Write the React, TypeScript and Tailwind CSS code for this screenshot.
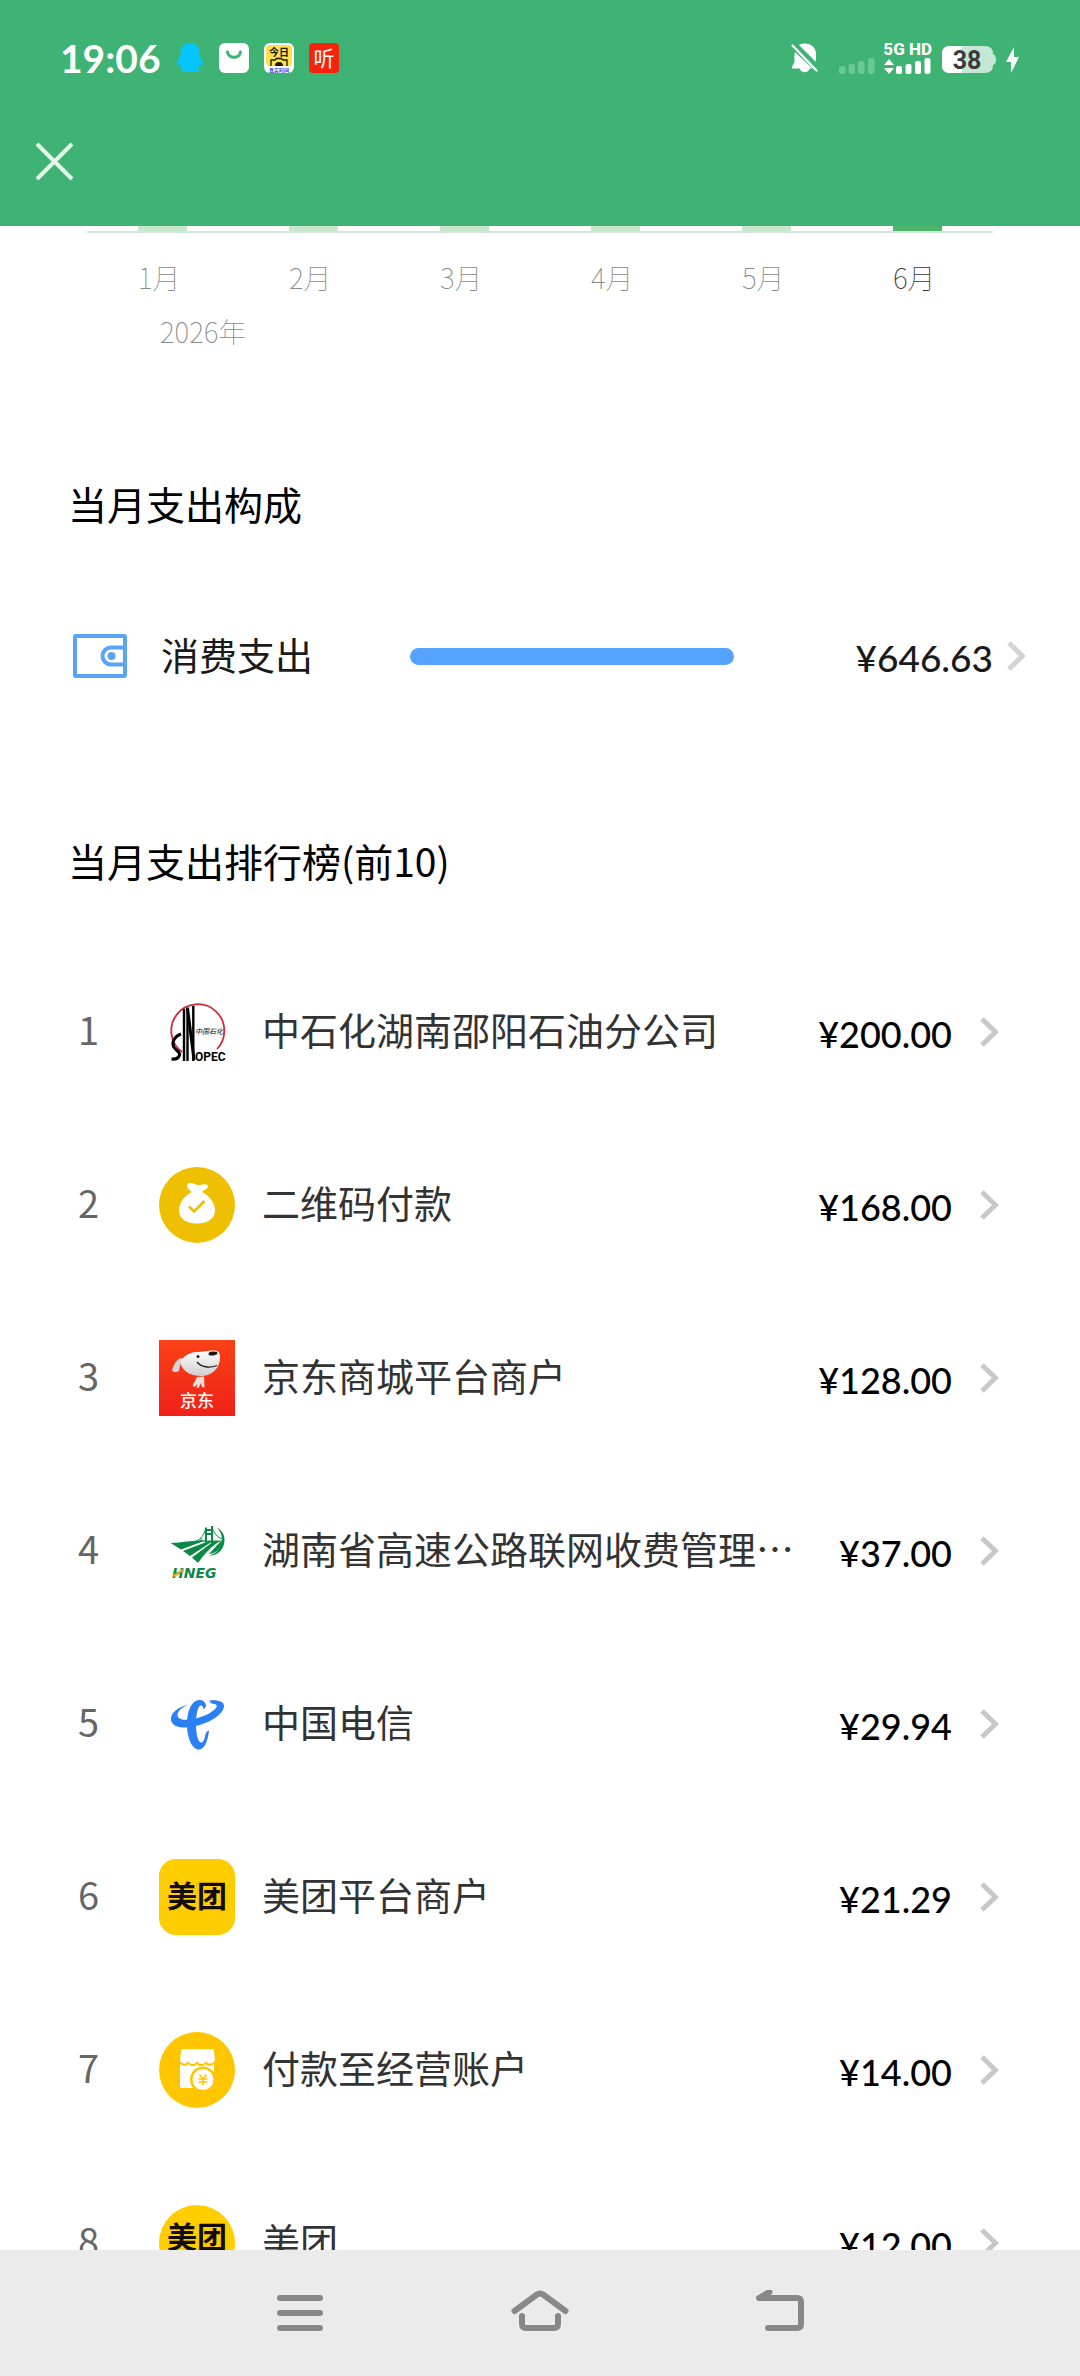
import type { ReactNode } from "react"

interface Month {
  label: string
  active?: boolean
}

interface RankItem {
  name: string
  amount: string
  icon: ReactNode
}

const months: Month[] = [
  { label: "1月" },
  { label: "2月" },
  { label: "3月" },
  { label: "4月" },
  { label: "5月" },
  { label: "6月", active: true },
]

function Chevron({ className }: { className: string }) {
  return (
    <svg className={className} width="19" height="30" viewBox="0 0 19 30" fill="none" stroke="currentColor" strokeWidth="5" aria-hidden="true">
      <path d="M2 2 15.5 15 2 28" />
    </svg>
  )
}

function SinopecIcon() {
  return (
    <svg width="76" height="76" viewBox="0 0 76 76" aria-hidden="true">
      <path d="M23 58A26.500 26.500 0 1 1 58 55" fill="none" stroke="#d02a3e" strokeWidth="1.800" />
      <path d="M25 15v52M28.500 13.500v53.500M34.300 12v55" stroke="#000" strokeWidth="2.400" />
      <path d="M28.500 14l6.500 52" stroke="#000" strokeWidth="3" />
      <path d="M22 40c-6 2-9.500 8-7.500 12.500s7 5 6 8.500-4 4.500-8 4" fill="none" stroke="#000" strokeWidth="3" />
      <text x="36" y="67" fontSize="12" fontWeight="700" fontFamily="Roboto, sans-serif">OPEC</text>
      <text x="36" y="40" fontSize="7" fontStyle="italic" fontFamily="'Noto Sans CJK SC', sans-serif">中国石化</text>
    </svg>
  )
}

function MoneyBagIcon() {
  return (
    <svg width="76" height="76" viewBox="0 0 76 76" aria-hidden="true">
      <circle cx="38" cy="38" r="38" fill="#efc000" />
      <path d="M33 25c-3-2-5.500-4.500-5-7 .7-2.500 4-2.700 6.500-1.500 3.500 1.700 5 2 8 1.200 3-.8 6.500-.2 6.500 1.300 0 3-4.500 4-6 6 7.500 3.500 13 11 13 18.500C56 52 48 56.500 38 56.500S20 52 20 43.500C20 36 25.500 28.500 33 25z" fill="#fff" />
      <path d="M30 39.500l5 5L45.500 34" fill="none" stroke="#efc000" strokeWidth="2.600" />
    </svg>
  )
}

function JdIcon() {
  return (
    <svg width="76" height="76" viewBox="0 0 76 76" aria-hidden="true">
      <defs>
        <linearGradient id="jd-bg" x1="0" y1="0" x2="0" y2="1">
          <stop offset="0" stopColor="#fb4116" />
          <stop offset="1" stopColor="#ef2118" />
        </linearGradient>
        <linearGradient id="jd-head" x1="0" y1="0" x2="0" y2="1">
          <stop offset="0" stopColor="#fff" />
          <stop offset="1" stopColor="#cfcfcf" />
        </linearGradient>
      </defs>
      <rect width="76" height="76" fill="url(#jd-bg)" />
      <path d="M22 18c-4 1-6.500 5-9 12 1 2.500 5 2.500 7 1 .5-3 1-7 4-12z" fill="#d8d4d4" />
      <path d="M22 21c3-6 9-8.500 16-9 7-.5 13-2 18-1.500 4 .3 5 3 5 7C61 29 52 36 42 36c-10 0-17-4-20-11z" fill="url(#jd-head)" />
      <ellipse cx="54" cy="13.500" rx="4.500" ry="2" transform="rotate(-5 54 13.500)" fill="#1c1010" />
      <circle cx="39" cy="16.500" r="1.500" fill="#222" />
      <path d="M38 22c4 5 12 6.500 20 3.500" fill="none" stroke="#222" strokeWidth="1.300" />
      <path d="M38 37l7-.5.500 11-2.500-.5-1-4-2.500 5h-2l1-4-3 3-2-1.500z" fill="#f4dcd8" />
      <text x="38" y="67" fontSize="17" fontWeight="500" fill="#fff" textAnchor="middle" fontFamily="'Noto Sans CJK SC', sans-serif">京东</text>
    </svg>
  )
}

function HnegIcon() {
  return (
    <svg width="76" height="76" viewBox="0 0 76 76" aria-hidden="true">
      <g fill="#0b8a46">
        <path d="M11.500 30c11-.5 20-2.500 35-2.500L22 36.500z" />
        <path d="M24 38l26-10h4L31 43z" />
        <path d="M33 44.500L55 28h6c-8 5-15 12-22 22z" />
        <path d="M57 14c6 3 9 8 8.500 14C65 37 58 43 50 42.500 58 40 63 35 63 27.500 63 22 61 17 57 14z" />
        <path d="M50 41l11-12 3-1c-1 7-6 12-14 13z" />
      </g>
      <path d="M47 14.500V30M53 13v17M47 17h6M47 21h6" stroke="#0b8a46" strokeWidth="2" />
      <path d="M37 28c5-2 8-6 9.500-12M53 15c2 5 5 9 10 11M40 28h24M42 25v4" fill="none" stroke="#0b8a46" strokeWidth="1" />
      <text x="13" y="65" fontSize="14" fontWeight="700" fontStyle="italic" fill="#0b8a46" fontFamily="'DejaVu Sans', Verdana, sans-serif">HNEG</text>
      <path d="M14 63c5-1 7-6 11-6" fill="none" stroke="#e5a72c" strokeWidth="2.500" />
    </svg>
  )
}

function TelecomIcon() {
  return (
    <svg width="76" height="76" viewBox="0 0 76 76" fill="#2b80f5" aria-hidden="true">
      <path d="M29 18.500C18 21 11 28 12 34c1 7 11 9 23 6.500C51 37 64 28.500 65 20.500c.5-5-6-7-14.500-6 .5 2 1.500 3 3.500 3.200 4 .5 4.500 2.300 3 4.300C53 26.500 45 31 34 33c-9 1.700-15.500.5-15.500-4C18.500 25.500 22.500 21.500 29 18.500z" />
      <path d="M47 20.500c0-4-2.500-6.500-6.500-6.500C33 14 28 24 28 38c0 15 5.500 25.500 12 25.500 5 0 9-8 10-19-1.500.5-2.500 1-3.500 3.500-.8 4.500-2 8.500-4 8.500-3.500 0-5.500-8-5.500-18 0-11 2-19 5-19 1.500 0 2 1.500 2.500 4z" />
    </svg>
  )
}

function MeituanIcon({ round }: { round?: boolean }) {
  return (
    <svg width="76" height="76" viewBox="0 0 76 76" aria-hidden="true">
      <rect width="76" height="76" rx={round ? 38 : 17} fill="#ffcd00" />
      <text x="38" y={round ? 43 : 48} fontSize="30" fontWeight="700" fill="#120c04" textAnchor="middle" fontFamily="'Noto Sans CJK SC', sans-serif">美团</text>
    </svg>
  )
}

function MerchantIcon() {
  return (
    <svg width="76" height="76" viewBox="0 0 76 76" aria-hidden="true">
      <circle cx="38" cy="38" r="38" fill="#ffc600" />
      <path d="M23 17h30q2 0 2 2l1 9c-2 4-7 5-9 1-2 4-7 4-9 0-2 4-7 4-9 0-2 4-7 3-8-1l1-9q0-2 1-2z" fill="#fff" />
      <path d="M21 32c3 3 7 2 8.500 0 2.500 3 6 3 8.500 0 2.500 3 6 3 8.500 0 2.500 3 6 2 8.500 0v22q0 2-2 2H23q-2 0-2-2z" fill="#fff" />
      <circle cx="44" cy="47.500" r="13" fill="#ffc600" />
      <circle cx="44" cy="47.500" r="10.500" fill="#fff" />
      <path d="M40.500 42.500l3.500 4.500 3.500-4.500M39.500 47h9M39.500 50h9M44 47v6.500" fill="none" stroke="#ffc600" strokeWidth="1.500" />
    </svg>
  )
}

const ranking: RankItem[] = [
  { name: "中石化湖南邵阳石油分公司", amount: "200.00", icon: <SinopecIcon /> },
  { name: "二维码付款", amount: "168.00", icon: <MoneyBagIcon /> },
  { name: "京东商城平台商户", amount: "128.00", icon: <JdIcon /> },
  { name: "湖南省高速公路联网收费管理…", amount: "37.00", icon: <HnegIcon /> },
  { name: "中国电信", amount: "29.94", icon: <TelecomIcon /> },
  { name: "美团平台商户", amount: "21.29", icon: <MeituanIcon /> },
  { name: "付款至经营账户", amount: "14.00", icon: <MerchantIcon /> },
  { name: "美团", amount: "12.00", icon: <MeituanIcon round /> },
]

function StatusBar() {
  return (
    <div className="flex h-[96px] items-center justify-between pt-5 pr-[60px] pl-[60px] text-white">
      <div className="flex items-center gap-[15px]">
        <time className="font-['Lato'] text-[39px] leading-none font-bold">19:06</time>
        {/* QQ */}
        <svg width="28" height="30" viewBox="0 0 28 30" aria-hidden="true">
          <path d="M14 0c6 0 9.500 4 9.500 10v3c2 3 4 7 3.500 9.500-.5 1-2-.5-3-1.500-.3 2-1 3-2 4.500 2 1 1 3.500-1 3.500H7c-2 0-3-2.500-1-3.500-1-1.500-1.700-2.500-2-4.500-1 1-2.500 2.500-3 1.500C.5 20 2.500 16 4.500 13v-3C4.500 4 8 0 14 0z" fill="#04c6fd" />
        </svg>
        {/* Shopping bag */}
        <svg width="30" height="30" viewBox="0 0 30 30" aria-hidden="true">
          <rect width="30" height="30" rx="6" fill="#fff" />
          <path d="M8.500 9c1 7 12 7 13 0" fill="none" stroke="#3eb373" strokeWidth="3" strokeLinecap="round" />
        </svg>
        {/* Watermark camera */}
        <svg width="30" height="30" viewBox="0 0 30 30" aria-hidden="true">
          <rect width="30" height="30" rx="6" fill="#fff" />
          <rect x="2" y="2" width="26" height="21" rx="4" fill="#fbe14a" />
          <text x="15" y="12.500" fontSize="10" fontWeight="700" fill="#1b1705" textAnchor="middle" fontFamily="'Noto Sans CJK SC', sans-serif">今日</text>
          <path d="M7 23v-6h4l1.500-1.500h5L19 17h4v6" fill="none" stroke="#1b1705" strokeWidth="1.300" />
          <path d="M11 23a4 4 0 0 1 8 0z" fill="#1b1705" />
          <text x="15" y="28.500" fontSize="5" fontWeight="700" fill="#2448d8" textAnchor="middle" fontFamily="'Noto Sans CJK SC', sans-serif">真实时间</text>
        </svg>
        {/* Audio books */}
        <svg width="30" height="30" viewBox="0 0 30 30" aria-hidden="true">
          <rect width="30" height="30" rx="4" fill="#f8230c" />
          <text x="15" y="23" fontSize="21" fill="#fff" textAnchor="middle" fontFamily="'Noto Sans CJK SC', sans-serif">听</text>
        </svg>
      </div>

      <div className="flex items-center">
        {/* Muted bell */}
        <svg width="28" height="30" viewBox="0 0 28 30" aria-hidden="true">
          <path d="M4 9c-1 3-.5 7-.5 10L1 24v1.500h8c.5 5 9 5 9.500 0h3L4 9zM8 2c7-4 17 0 17 9v8L8 2z" fill="#fff" />
          <path d="M1.500 2.500l24 25" stroke="#fff" strokeWidth="2.200" strokeLinecap="round" />
        </svg>
        {/* Empty sim */}
        <svg className="mt-4 ml-[20px]" width="36" height="17" viewBox="0 0 36 17" fill="#6ac796" aria-hidden="true">
          <rect y="8" width="6.500" height="8" rx="2" />
          <rect x="9.500" y="6" width="6.500" height="10" rx="2" />
          <rect x="19" y="3" width="6.500" height="13" rx="2" />
          <rect x="29" width="6.500" height="16" rx="2" />
        </svg>
        <div className="ml-[8px] flex flex-col">
          <span className="font-['Roboto'] text-[17px] leading-[17px] font-extrabold whitespace-nowrap">5G HD</span>
          <svg width="48" height="17" viewBox="0 0 48 17" fill="#fff" aria-hidden="true">
            <path d="M6 1l5 6H1zM6 16l5-6H1z" />
            <rect x="13" y="8" width="6" height="8" rx="2" />
            <rect x="22.500" y="6" width="6" height="10" rx="2" />
            <rect x="32" y="3" width="6" height="13" rx="2" />
            <rect x="41.500" width="6" height="16" rx="2" />
          </svg>
        </div>
        {/* Battery */}
        <svg className="mt-1 ml-[10px]" width="54" height="28" viewBox="0 0 54 28" aria-hidden="true">
          <path d="M8 0h35q8 0 8 8 3 1 3 5.500T51 19q0 8-8 8H8q-8 0-8-8V8q0-8 8-8z" fill="#c5e8d5" />
          <path d="M8 0h12v27H8q-8 0-8-8V8q0-8 8-8z" fill="#fff" />
          <text x="25" y="23" fontSize="25" fontWeight="700" fill="#3b3b3b" textAnchor="middle" fontFamily="Roboto, sans-serif">38</text>
        </svg>
        <svg className="mt-1 ml-[9px]" width="15" height="28" viewBox="0 0 15 28" fill="#fff" aria-hidden="true">
          <path d="M9 1L1 16h5v11l8-16H9z" />
        </svg>
      </div>
    </div>
  )
}

function MonthChart() {
  return (
    <section>
      <div className="mx-[87px] grid grid-cols-6 border-b-2 border-[#cfe8d8]">
        {months.map((month) => (
          <div key={month.label} className={`mx-auto h-[5px] w-[49px] ${month.active ? "bg-[#4fb669]" : "bg-[#c7e6cb]"}`} />
        ))}
      </div>
      <div className="mx-[87px] mt-6 grid grid-cols-6 text-[28px] leading-[40px] font-thin">
        {months.map((month) => (
          <span key={month.label} className={`mx-auto w-[49px] whitespace-nowrap ${month.active ? "text-[#333333]" : "text-[#888888]"}`}>
            {month.label}
          </span>
        ))}
      </div>
      <p className="mt-[14px] pl-[160px] text-[28px] leading-[40px] font-thin text-[#888888]">2026年</p>
    </section>
  )
}

function NavBar() {
  return (
    <nav className="shrink-0 bg-[#ebebeb]">
      <div className="mx-auto grid h-[126px] w-2/3 grid-cols-3">
        <button type="button" aria-label="菜单" className="flex items-center justify-center">
          <svg width="46" height="38" viewBox="0 0 46 38" fill="none" stroke="#888" strokeWidth="6" strokeLinecap="round">
            <path d="M3 4h40M3 19h40M3 34h40" />
          </svg>
        </button>
        <button type="button" aria-label="主页" className="flex items-center justify-center">
          <svg width="58" height="46" viewBox="0 0 58 46" fill="none" stroke="#888" strokeWidth="6" strokeLinecap="round" strokeLinejoin="round">
            <path d="M3.500 21L26 4.500q3-2 6 0L54.500 21M11 26v8q0 4 4 4h28q4 0 4-4v-8" />
          </svg>
        </button>
        <button type="button" aria-label="返回" className="flex items-center justify-center">
          <svg width="48" height="46" viewBox="0 0 48 46" fill="none" stroke="#888" strokeWidth="6" strokeLinecap="round" strokeLinejoin="round">
            <path d="M13.500 2L3 8h38q4 0 4 4v22q0 4-4 4H12" />
          </svg>
        </button>
      </div>
    </nav>
  )
}

export default function App() {
  return (
    <div lang="zh-CN" className="flex h-screen flex-col bg-white font-['Noto_Sans_CJK_SC',sans-serif]">
      <header className="shrink-0 bg-[#3eb373]">
        <StatusBar />
        <div className="flex h-[130px] items-center pl-[35px]">
          <button type="button" aria-label="关闭" className="text-[#e4f8ec]">
            <svg width="39" height="39" viewBox="0 0 39 39" fill="none" stroke="currentColor" strokeWidth="4">
              <path d="M2 2l35 35M37 2L2 37" />
            </svg>
          </button>
        </div>
      </header>

      <main className="min-h-0 flex-1 overflow-y-auto [scrollbar-width:none]">
        <MonthChart />

        {/* Spending breakdown */}
        <section className="mt-[124px]">
          <h2 className="pl-[68px] text-[39px] leading-[56px] text-black">当月支出构成</h2>
          <a href="#breakdown" className="mt-[77px] flex h-24 items-center pr-[54px] pl-[73px] text-[#1a1a1a]">
            <svg width="54" height="44" viewBox="0 0 54 44" fill="none" stroke="#5ba3f8" strokeWidth="4" aria-hidden="true">
              <rect x="2" y="2" width="50" height="40" rx="1" />
              <path d="M52 13.500H38a8.500 8.500 0 0 0 0 17h14" />
              <circle cx="38.500" cy="22" r="4" fill="#5ba3f8" stroke="none" />
            </svg>
            <span className="ml-[34px] w-[249px] pb-1.5 text-[38px]">消费支出</span>
            <span className="h-[17px] flex-1 rounded-full bg-[#56a3ff]" />
            <span className="w-[259px] pt-1 text-right font-['Lato'] text-[37px] font-medium">¥646.63</span>
            <Chevron className="ml-[14px] text-[#d4d4d4]" />
          </a>
        </section>

        {/* Top 10 */}
        <section className="mt-[128px]">
          <h2 className="pl-[68px] text-[39px] leading-[56px] text-black">当月支出排行榜(前10)</h2>
          <ol className="mt-[57px]">
            {ranking.map((item, index) => (
              <li key={item.name}>
                <a href={`#rank-${index + 1}`} className="flex h-[173px] items-center pr-[81px] pl-[78px]">
                  <span className="w-[81px] pb-1.5 text-[38px] text-[#666666]">{index + 1}</span>
                  {item.icon}
                  <span className="ml-[27px] flex-1 truncate pb-1.5 text-[38px] text-[#333333]">{item.name}</span>
                  <span className="pt-1 font-['Lato'] text-[36px] font-medium text-black">¥{item.amount}</span>
                  <Chevron className="ml-[28px] text-[#c8c8c8]" />
                </a>
              </li>
            ))}
          </ol>
        </section>
      </main>

      <NavBar />
    </div>
  )
}
